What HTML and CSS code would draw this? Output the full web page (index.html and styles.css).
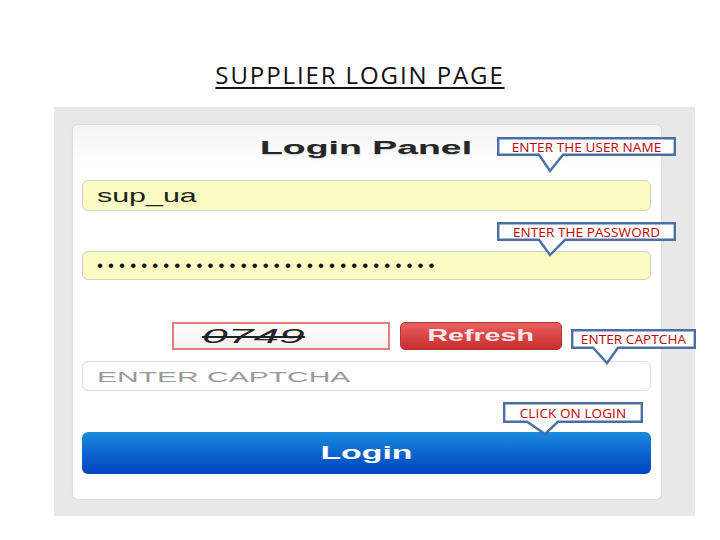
FILE: index.html
```html
<!DOCTYPE html>
<html>
<head>
<meta charset="utf-8">
<link rel="stylesheet" href="styles.css">
</head>
<body>
<h1 class="title">SUPPLIER LOGIN PAGE</h1>
<div class="panel">
  <div class="card">
    <div class="heading"><span class="stretch s-head">Login Panel</span></div>
    <div class="field filled"><span class="stretch s-user">sup_ua</span></div>
    <div class="field filled pw"><span class="dots">•••••••••••••••••••••••••••••••</span></div>
    <div class="captcha-row">
      <div class="captcha-img"><span class="stretch s-code">0749</span></div>
      <div class="btn-refresh"><span class="stretch s-refresh">Refresh</span></div>
    </div>
    <div class="field blank"><span class="stretch s-ph">ENTER CAPTCHA</span></div>
    <div class="btn-login"><span class="stretch s-login">Login</span></div>
  </div>
</div>

<div class="callout c-user">
  <svg class="shape" width="179" height="36" viewBox="0 0 179 36"><path d="M1.2 1.2 H177.8 V17.8 H66 L53 34 L42 17.8 H1.2 Z"/></svg>
  <span class="ctext">ENTER THE USER NAME</span>
</div>
<div class="callout c-pass">
  <svg class="shape" width="179" height="36" viewBox="0 0 179 36"><path d="M1.2 1.2 H177.8 V17.8 H68 L53 33 L42 17.8 H1.2 Z"/></svg>
  <span class="ctext">ENTER THE PASSWORD</span>
</div>
<div class="callout c-capt">
  <svg class="shape" width="125" height="36" viewBox="0 0 125 36"><path d="M1.2 1.2 H123.8 V18.8 H47 L36 34 L22 18.8 H1.2 Z"/></svg>
  <span class="ctext">ENTER CAPTCHA</span>
</div>
<div class="callout c-login">
  <svg class="shape" width="140" height="34" viewBox="0 0 140 34"><path d="M1.2 1.2 H138.8 V19.8 H55 L42 32 L24 19.8 H1.2 Z"/></svg>
  <span class="ctext">CLICK ON LOGIN</span>
</div>
</body>
</html>
```

FILE: styles.css
```css
html, body {
  margin: 0;
  padding: 0;
}
body {
  position: relative;
  width: 720px;
  height: 540px;
  overflow: hidden;
  background: #ffffff;
  font-family: "Liberation Sans", Arial, sans-serif;
}

.title {
  margin: 59px 0 0;
  font-family: "Open Sans", "Liberation Sans", sans-serif;
  font-weight: 400;
  font-size: 24px;
  line-height: 31px;
  letter-spacing: 1.9px;
  text-align: center;
  color: #111;
  text-decoration: underline;
  text-decoration-thickness: 1.5px;
  text-underline-offset: 3px;
}

.panel {
  margin: 17px 0 0 54px;
  width: 641px;
  box-sizing: border-box;
  padding: 18px 34px 17px 19px;
  background: #e8e8e8;
}

.card {
  height: 374px;
  box-sizing: border-box;
  padding: 13px 10px 0 9px;
  background: linear-gradient(#f4f4f4, #ffffff 40px);
  border-radius: 5px;
  box-shadow: 0 0 2px rgba(0, 0, 0, 0.18);
}

.stretch {
  display: inline-block;
  transform-origin: left center;
  white-space: nowrap;
}

.heading {
  height: 42px;
  line-height: 20px;
  text-align: center;
  font-size: 18px;
  font-weight: bold;
  color: #262626;
  text-shadow: 0 1px 1px rgba(0, 0, 0, 0.2);
}
.s-head {
  transform-origin: center center;
  transform: scaleX(2.08);
}

.field {
  height: 31px;
  box-sizing: border-box;
  border: 1px solid #d2d2c2;
  border-radius: 6px;
  padding-left: 14px;
  display: flex;
  align-items: center;
}
.filled {
  background: #fbfcc4;
}
.pw {
  margin-top: 40px;
  height: 29px;
}
.blank {
  margin-top: 11px;
  height: 30px;
  background: #fff;
  border-color: #dcdcdc;
}

.s-user {
  font-size: 19px;
  color: #222;
  transform: scaleX(1.6);
}
.dots {
  font-size: 17px;
  letter-spacing: 5.1px;
  color: #111;
  white-space: nowrap;
}
.s-ph {
  font-size: 15px;
  color: #9a9a9a;
  transform: scaleX(2);
}

.captcha-row {
  display: flex;
  gap: 10px;
  margin: 42px 0 0 90px;
  height: 28px;
}
.captcha-img {
  width: 218px;
  box-sizing: border-box;
  border: 2px solid #e57d7d;
  background: linear-gradient(#ffffff, #f1f1f1);
  padding-left: 28px;
  display: flex;
  align-items: center;
}
.s-code {
  font-size: 21px;
  font-style: italic;
  color: #222;
  text-decoration: line-through;
  text-decoration-thickness: 1.5px;
  transform: scaleX(2.2);
}
.btn-refresh {
  width: 162px;
  box-sizing: border-box;
  border: 1px solid #b93434;
  border-radius: 5px;
  background: linear-gradient(#e96060, #c82d2d);
  display: flex;
  align-items: center;
  justify-content: center;
}
.s-refresh {
  font-size: 17px;
  font-weight: bold;
  color: #fbe9e9;
  transform-origin: center center;
  transform: scaleX(1.68);
}

.btn-login {
  margin-top: 41px;
  height: 42px;
  border-radius: 6px;
  background: linear-gradient(#1b8ade, #0a62cc 55%, #0045be);
  display: flex;
  align-items: center;
  justify-content: center;
}
.s-login {
  font-size: 18px;
  font-weight: bold;
  color: #ffffff;
  transform-origin: center center;
  transform: scaleX(1.88);
}

.callout {
  position: absolute;
  display: flex;
  align-items: center;
  justify-content: center;
}
.shape {
  position: absolute;
  left: 0;
  top: 0;
  overflow: visible;
}
.shape path {
  fill: #ffffff;
  stroke: #4a6fa5;
  stroke-width: 2.4;
  stroke-linejoin: miter;
}
.ctext {
  position: relative;
  font-family: "Open Sans", "Liberation Sans", sans-serif;
  font-size: 13.5px;
  letter-spacing: 0.1px;
  color: #c00000;
  white-space: nowrap;
}
.c-user {
  left: 497px;
  top: 137px;
  width: 179px;
  height: 19px;
}
.c-pass {
  left: 497px;
  top: 222px;
  width: 179px;
  height: 19px;
}
.c-capt {
  left: 571px;
  top: 329px;
  width: 125px;
  height: 20px;
}
.c-login {
  left: 503px;
  top: 402px;
  width: 140px;
  height: 21px;
}
```
